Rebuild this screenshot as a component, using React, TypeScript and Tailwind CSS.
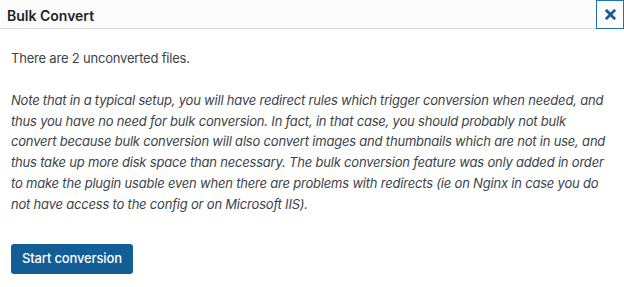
import React from 'react';

const App: React.FC = () => {
  return (
    <div className="w-[624px] h-[287px] bg-white text-[#3c434a] font-['Inter',sans-serif] overflow-hidden">
      {/* Header */}
      <div className="flex items-stretch h-[29px] bg-[#fcfcfc] border-b border-[#dcdcde]">
        <h1 className="flex-1 pl-[7px] pt-[5px] text-[14px] font-semibold text-[#1d2327]">Bulk Convert</h1>
        <button className="w-[28px] h-[29px] flex items-center justify-center border border-[#2271b1] bg-[#fcfcfc]">
          <svg width="11" height="11" viewBox="0 0 12 12">
            <path d="M2 2 L10 10 M10 2 L2 10" stroke="#135e96" strokeWidth="3" strokeLinecap="square" />
          </svg>
        </button>
      </div>

      {/* Body */}
      <div className="px-[11px] pt-[19px] text-[13px] leading-[20.8px] tracking-[-0.2px]">
        <p>There are 2 unconverted files.</p>
        <p className="mt-[21px] italic whitespace-nowrap">
          Note that in a typical setup, you will have redirect rules which trigger conversion when needed, and<br />
          thus you have no need for bulk conversion. In fact, in that case, you should probably not bulk<br />
          convert because bulk conversion will also convert images and thumbnails which are not in use, and<br />
          thus take up more disk space than necessary. The bulk conversion feature was only added in order<br />
          to make the plugin usable even when there are problems with redirects (ie on Nginx in case you do<br />
          not have access to the config or on Microsoft IIS).
        </p>
        <button className="mt-[29px] h-[30px] px-[11px] rounded-[3px] bg-[#135e96] text-white text-[13px] font-medium tracking-[-0.15px]">
          Start conversion
        </button>
      </div>
    </div>
  );
};

export default App;
